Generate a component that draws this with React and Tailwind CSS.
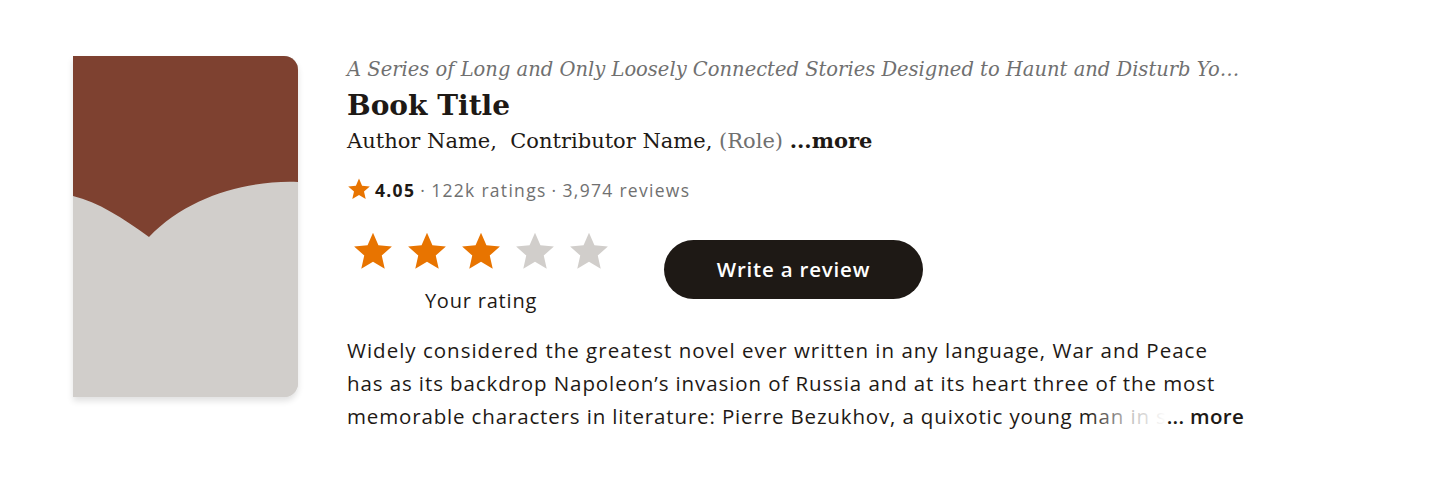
import React from 'react'

const serif = { fontFamily: '"DejaVu Serif", "Liberation Serif", serif' }

function Star({ className, size = 40 }) {
  return (
    <svg width={size} height={size} viewBox="0 0 24 24" className={className}>
      <path fill="currentColor" d="M12 1.6l3.1 7.1 7.7.7-5.8 5.1 1.7 7.6L12 18.1l-6.7 4 1.7-7.6-5.8-5.1 7.7-.7z" />
    </svg>
  )
}

function Cover() {
  return (
    <div className="w-[225px] h-[341px] shrink-0 rounded-tr-[14px] rounded-br-[14px] overflow-hidden bg-[#d1cecb] shadow-[0_4px_6px_rgba(0,0,0,0.12)]">
      <svg width="225" height="341" viewBox="0 0 225 341">
        <rect width="225" height="341" fill="#d1cecb" />
        <path d="M0 0H225V126C175 124 115 140 76 181C50 162 25 146 0 140Z" fill="#7e4130" />
      </svg>
    </div>
  )
}

export default function App() {
  const stars = [1, 2, 3, 4, 5]
  return (
    <div className="w-[1430px] h-[492px] bg-white flex pl-[73px] pt-[56px] gap-[49px]" style={{ fontFamily: '"Open Sans", "Liberation Sans", sans-serif' }}>
      <Cover />
      <div className="flex flex-col w-[920px]">
        <div className="text-[19.5px] italic text-[#707070] leading-[28px] whitespace-nowrap" style={serif}>
          A Series of Long and Only Loosely Connected Stories Designed to Haunt and Disturb Yo…
        </div>
        <h1 className="text-[28px] font-bold text-[#1e1915] leading-[40px] mt-[2px]" style={serif}>Book Title</h1>
        <div className="text-[21px] text-[#1e1915] leading-[30px]" style={serif}>
          Author Name,&nbsp; Contributor Name, <span className="text-[#707070]">(Role)</span>{' '}
          <span className="font-bold">...more</span>
        </div>
        <div className="flex items-center mt-[22px] text-[17.5px] tracking-[1.3px] text-[#707070] leading-[24px]">
          <Star size={24} className="text-[#e87400] mr-[4px] -mt-[2px]" />
          <span className="font-bold text-[#1e1915]">4.05</span>
          <span className="mx-[5px]">·</span>
          <span>122k ratings</span>
          <span className="mx-[5px]">·</span>
          <span>3,974 reviews</span>
        </div>
        <div className="flex items-start mt-[28px]">
          <div className="flex flex-col items-center ml-[5px]">
            <div className="flex gap-[12px]">
              {stars.map(n => (
                <Star key={n} size={42} className={n <= 3 ? 'text-[#e87400]' : 'text-[#d1cecb]'} />
              ))}
            </div>
            <div className="text-[20px] tracking-[0.8px] text-[#1e1915] leading-[28px] mt-[15px]">Your rating</div>
          </div>
          <button className="ml-[54px] mt-[10px] w-[259px] h-[59px] rounded-full bg-[#1e1915] text-white text-[20.5px] tracking-[0.8px] font-semibold">
            Write a review
          </button>
        </div>
        <div className="mt-[19px] text-[20.5px] tracking-[1px] text-[#1e1915] leading-[33px]">
          <p>Widely considered the greatest novel ever written in any language, War and Peace</p>
          <p className="tracking-[0.9px]">has as its backdrop Napoleon’s invasion of Russia and at its heart three of the most</p>
          <div className="flex items-baseline tracking-[0.85px]">
            <span className="relative whitespace-nowrap">
              memorable characters in literature: Pierre Bezukhov, a quixotic young man in s
              <span className="absolute right-0 top-0 h-full w-[80px] bg-gradient-to-r from-white/0 via-white/70 to-white" />
            </span>
            <span className="font-semibold tracking-[0.3px]">... more</span>
          </div>
        </div>
      </div>
    </div>
  )
}
